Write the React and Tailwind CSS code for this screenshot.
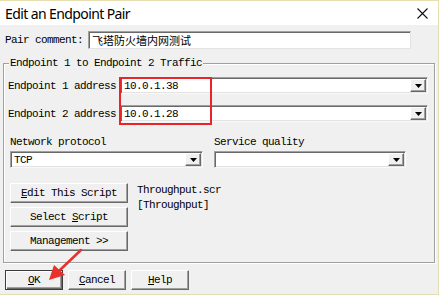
import React from "react";

const mono = "font-['Liberation_Mono',monospace] text-[11px] tracking-[-0.6px] text-black leading-[12px]";

const Combo = ({ className, value }) => (
  <div
    className={`${className} h-[17px] bg-white border border-[#a0a0a0] border-r-white border-b-[#f8f8f8] shadow-[inset_1px_1px_0_#696969,inset_-1px_-1px_0_#e3e3e3] flex items-center justify-between`}
  >
    <span className={`${mono} pl-[3px] pt-[1px]`}>{value}</span>
    <div className="w-[16px] h-[13px] mr-[1px] bg-[#f0f0f0] border border-white border-r-[#696969] border-b-[#696969] shadow-[inset_-1px_-1px_0_#a0a0a0] flex items-center justify-center">
      <svg width="7" height="4" viewBox="0 0 7 4">
        <polygon points="0,0 7,0 3.5,4" fill="#000" />
      </svg>
    </div>
  </div>
);

const Btn = ({ className, children, strong }) => (
  <div
    className={`${className} ${
      strong
        ? "border border-[#3c3c3c] shadow-[inset_1px_1px_0_#fff,inset_-1px_-1px_0_#696969,inset_-2px_-2px_0_#a0a0a0]"
        : "border border-white border-r-[#696969] border-b-[#696969] shadow-[inset_-1px_-1px_0_#a0a0a0]"
    } bg-[#f0f0f0] flex items-center justify-center`}
  >
    <span className={mono}>{children}</span>
  </div>
);

export default function App() {
  return (
    <div className="w-[439px] h-[295px] bg-[#f0f0f0] relative overflow-hidden border-t border-r border-b border-[#e6ddb0]">
      {/* title bar */}
      <div className="h-[24px] bg-white flex items-center justify-between pl-[5px] pr-[10px]">
        <span className="font-['Noto_Sans',sans-serif] text-[14px] tracking-[-0.6px] text-black">
          Edit an Endpoint Pair
        </span>
        <svg width="11" height="11" viewBox="0 0 11 11">
          <path d="M0.5 0.5 L10.5 10.5 M10.5 0.5 L0.5 10.5" stroke="#111" strokeWidth="1.1" />
        </svg>
      </div>

      {/* pair comment */}
      <div className="flex items-center mt-[6px] h-[18px] pl-[5px]">
        <span className={`${mono} w-[83px]`}>Pair comment:</span>
        <div className="w-[323px] h-[18px] bg-white border border-[#a0a0a0] border-r-[#e3e3e3] border-b-[#e3e3e3] shadow-[inset_1px_1px_0_#696969] flex items-center pl-[3px]">
          <span className="font-['Noto_Sans_CJK_SC',sans-serif] text-[11px] text-black leading-[12px]">
            飞塔防火墙内网测试
          </span>
        </div>
      </div>

      {/* group box */}
      <div className="relative mt-[14px] ml-[3px] w-[432px] h-[200px] border border-[#a0a0a0] shadow-[1px_1px_0_#fff,inset_1px_1px_0_#fff]">
        <span className={`${mono} absolute left-[5px] -top-[7px] px-[1px] bg-[#f0f0f0]`}>
          Endpoint 1 to Endpoint 2 Traffic
        </span>

        <div className="pt-[13px] pl-[4px]">
          <div className="flex items-center">
            <span className={`${mono} w-[112px]`}>Endpoint 1 address</span>
            <Combo className="w-[308px]" value="10.0.1.38" />
          </div>
          <div className="flex items-center mt-[11px]">
            <span className={`${mono} w-[112px]`}>Endpoint 2 address</span>
            <Combo className="w-[308px]" value="10.0.1.28" />
          </div>
        </div>

        <div className="flex gap-[11px] pl-[6px] mt-[14px]">
          <div className="flex flex-col gap-[3px]">
            <span className={mono}>Network protocol</span>
            <Combo className="w-[193px]" value="TCP" />
          </div>
          <div className="flex flex-col gap-[3px]">
            <span className={mono}>Service quality</span>
            <Combo className="w-[192px]" value="" />
          </div>
        </div>

        <div className="flex gap-[9px] pl-[6px] mt-[15px]">
          <div className="flex flex-col gap-[4px]">
            <Btn className="w-[118px] h-[20px]">
              <u>E</u>dit This Script
            </Btn>
            <Btn className="w-[118px] h-[20px]">
              Select <u>S</u>cript
            </Btn>
            <Btn className="w-[118px] h-[20px]">Management &gt;&gt;</Btn>
          </div>
          <div className="flex flex-col gap-[3px] pt-[1px]">
            <span className={mono}>Throughput.scr</span>
            <span className={mono}>[Throughput]</span>
          </div>
        </div>
      </div>

      {/* bottom buttons */}
      <div className="flex gap-[5px] pl-[5px] mt-[7px]">
        <Btn className="w-[58px] h-[20px]" strong>
          <u>O</u>K
        </Btn>
        <Btn className="w-[58px] h-[20px]">
          <u>C</u>ancel
        </Btn>
        <Btn className="w-[58px] h-[20px]">
          <u>H</u>elp
        </Btn>
      </div>

      {/* annotations */}
      <div className="absolute left-[119px] top-[76px] w-[93px] h-[48px] border-2 border-[#e8262a]" />
      <svg className="absolute left-[40px] top-[245px]" width="46" height="40" viewBox="0 0 46 40">
        <line x1="41" y1="4" x2="20" y2="24" stroke="#e8302c" strokeWidth="2.5" strokeLinecap="round" />
        <polygon points="9,34 14,19 25,29" fill="#e8302c" />
      </svg>
    </div>
  );
}
